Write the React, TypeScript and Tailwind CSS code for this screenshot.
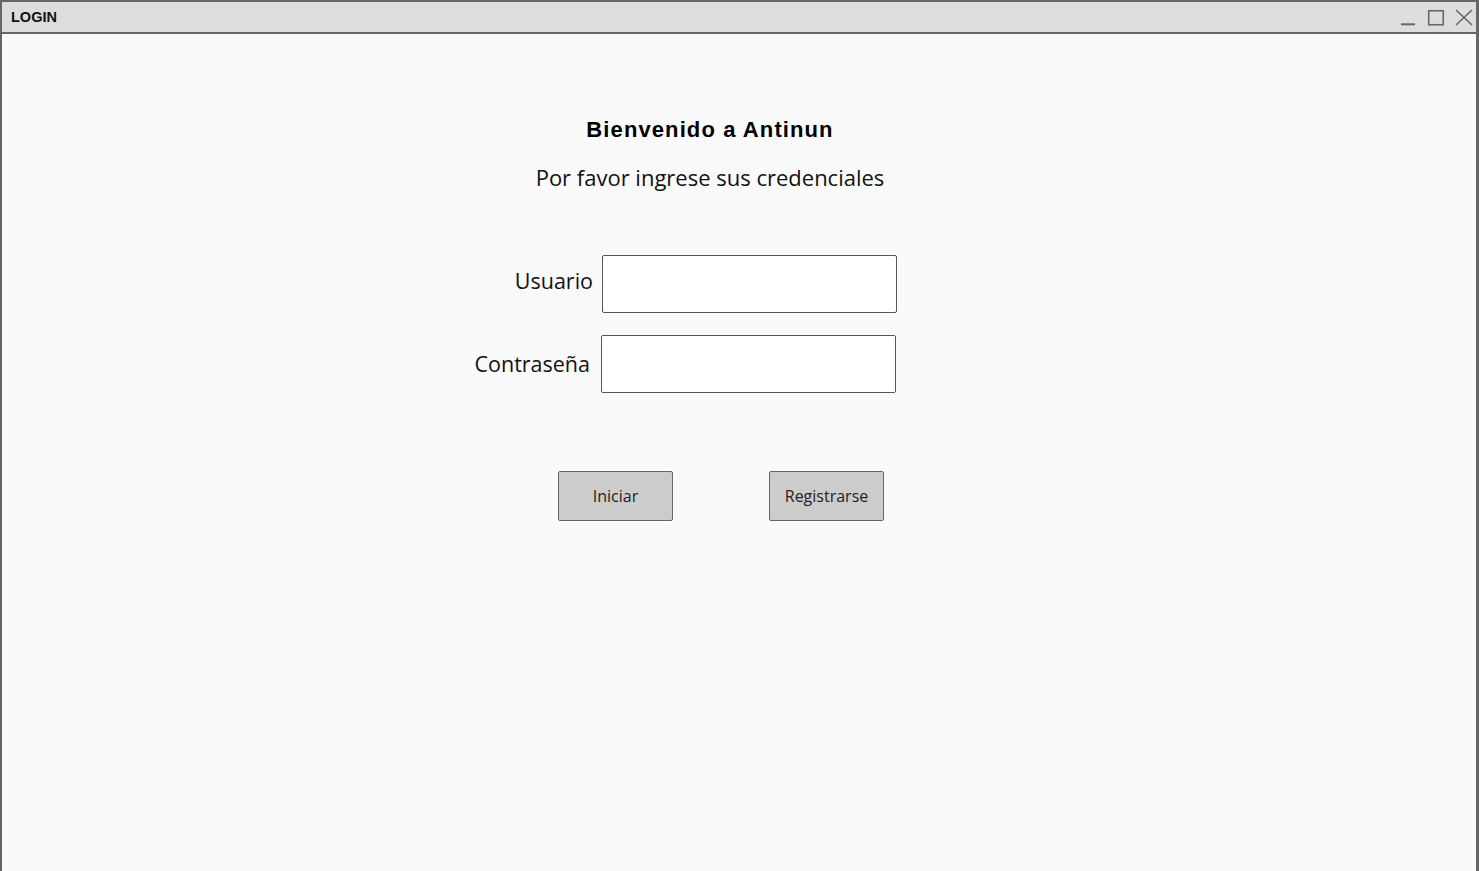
import React from "react";

const hand = "font-['Open_Sans',sans-serif]";

export default function App() {
  return (
    <div className="w-[1479px] h-[871px] overflow-hidden bg-[#fafafa] border-t-2 border-l-2 border-r-[3px] border-[#666666] flex flex-col">
      <div className="h-[32px] shrink-0 bg-[#dddddd] border-b-2 border-[#666666] flex items-center justify-between">
        <span className="pl-[9px] pt-[1px] text-[14.5px] font-bold text-[#111111] font-['Liberation_Sans',Arial,sans-serif] leading-none">
          LOGIN
        </span>
        <svg width="76" height="20" viewBox="0 0 76 20" className="mr-[1px]" fill="none" stroke="#666666">
          <line x1="2" y1="17.3" x2="16" y2="17.3" strokeWidth="2" />
          <rect x="29.75" y="3.75" width="14.5" height="14" strokeWidth="1.6" />
          <line x1="57" y1="3" x2="73" y2="18" strokeWidth="1.6" />
          <line x1="73" y1="3" x2="57" y2="18" strokeWidth="1.6" />
        </svg>
      </div>

      <div className="flex flex-col">
        <h1 className="w-[1416px] mt-[84px] text-center text-[22px] leading-[24px] tracking-[1.1px] font-bold text-black font-['Liberation_Sans',Arial,sans-serif]">
          Bienvenido a Antinun
        </h1>
        <p className={`w-[1416px] mt-[20px] text-center text-[22px] leading-[30px] text-[#111111] ${hand}`}>
          Por favor ingrese sus credenciales
        </p>

        <div className="mt-[63px] ml-[460px] flex flex-col gap-[22px]">
          <div className="flex items-center">
            <label className={`w-[140px] pr-[9px] pb-[6px] text-right text-[21.5px] leading-[28px] text-[#111111] ${hand}`}>
              Usuario
            </label>
            <div className="w-[295px] h-[58px] bg-white border border-[#555555] rounded-[2px]" />
          </div>
          <div className="flex items-center">
            <label className={`w-[139px] pr-[11px] text-right text-[21.5px] leading-[28px] text-[#111111] ${hand}`}>
              Contraseña
            </label>
            <div className="w-[295px] h-[58px] bg-white border border-[#555555] rounded-[2px]" />
          </div>
        </div>

        <div className="mt-[78px] ml-[556px] flex gap-[96px]">
          <button className={`w-[115px] h-[50px] bg-[#cccccc] border border-[#666666] rounded-[2px] text-[16px] text-[#222222] ${hand}`}>
            Iniciar
          </button>
          <button className={`w-[115px] h-[50px] bg-[#cccccc] border border-[#666666] rounded-[2px] text-[16px] text-[#222222] ${hand}`}>
            Registrarse
          </button>
        </div>
      </div>
    </div>
  );
}
